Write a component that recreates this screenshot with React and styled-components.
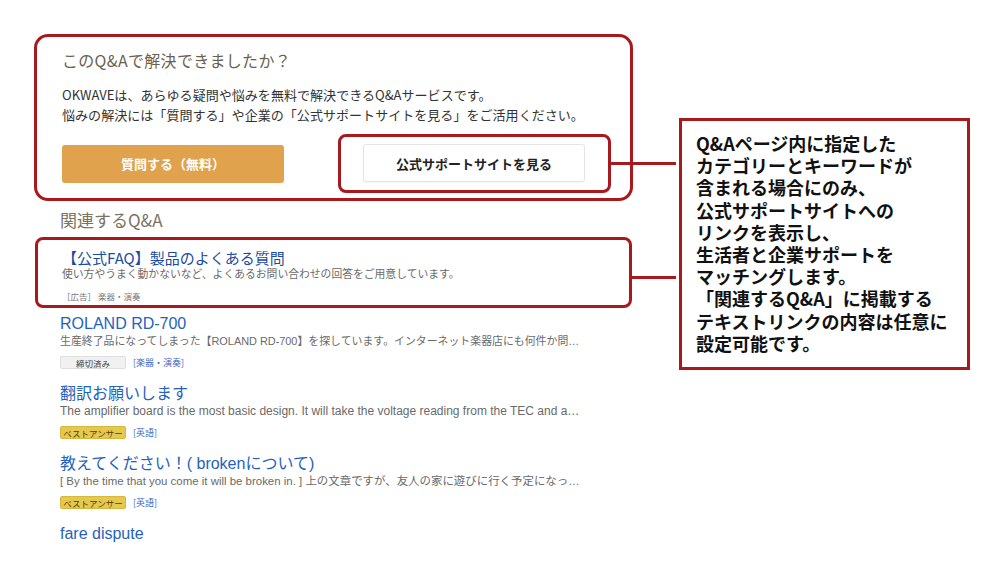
import React from 'react';
import styled, { createGlobalStyle } from 'styled-components';

const RED = '#a8191d';

const GlobalStyle = createGlobalStyle`
  html, body {
    margin: 0;
    padding: 0;
    background: #fff;
  }
  * {
    box-sizing: border-box;
  }
`;

const Page = styled.div`
  width: 1000px;
  height: 566px;
  display: flex;
  align-items: flex-start;
  padding: 34px 0 0 34px;
  font-family: 'Noto Sans CJK JP', sans-serif;
  overflow: hidden;
`;

const Column = styled.div`
  width: 599px;
  display: flex;
  flex-direction: column;
`;

const Panel = styled.section`
  height: 167px;
  border: 3px solid ${RED};
  border-radius: 14px;
  padding: 0 0 0 25px;
  display: flex;
  flex-direction: column;
`;

const PanelTitle = styled.h2`
  margin: 11px 0 0;
  font-size: 16px;
  line-height: 24px;
  font-weight: 400;
  color: #6a6150;
  letter-spacing: 0.3px;
`;

const PanelText = styled.p`
  margin: 13px 0 0;
  font-size: 13.05px;
  line-height: 20px;
  color: #333;
`;

const ButtonRow = styled.div`
  margin-top: 9px;
  display: flex;
  align-items: center;
  gap: 54px;
`;

const Button = styled.div`
  width: 222px;
  height: 38px;
  border-radius: 3px;
  display: flex;
  align-items: center;
  justify-content: center;
  font-size: 13px;
  font-weight: 700;
  background: ${(p) => (p.$primary ? '#e0a24c' : '#fff')};
  color: ${(p) => (p.$primary ? '#fff' : '#222')};
  border: ${(p) => (p.$primary ? 'none' : '1px solid #e4e4e4')};
  box-shadow: ${(p) => (p.$primary ? 'none' : '0 1px 1px rgba(0,0,0,0.04)')};
`;

const Highlight = styled.div`
  position: relative;
  border: 3px solid ${RED};
  border-radius: 8px;
  padding: ${(p) => p.$pad};
  height: ${(p) => p.$height};
`;

const Connector = styled.span`
  position: absolute;
  left: 100%;
  top: ${(p) => p.$top};
  width: ${(p) => p.$width};
  height: 3px;
  margin-left: 3px;
  background: ${RED};
`;

const SectionTitle = styled.h3`
  margin: 7px 0 0 26px;
  font-size: 17px;
  line-height: 24px;
  font-weight: 400;
  color: #7b725f;
`;

const FaqBox = styled(Highlight)`
  margin: 5px 1px 0;
  display: flex;
  flex-direction: column;
`;

const FaqTitle = styled.div`
  font-size: 15px;
  line-height: 18px;
  color: #1b4ba3;
`;

const Desc = styled.div`
  font-family: 'Liberation Sans', 'Noto Sans CJK JP', sans-serif;
  font-size: ${(p) => p.$size || '11px'};
  line-height: 14px;
  color: #6a6a6a;
  white-space: nowrap;
`;

const AdLine = styled.div`
  margin-top: 9px;
  font-size: 8.5px;
  line-height: 12px;
  color: #777;
`;

const List = styled.div`
  margin-top: 6px;
  padding-left: 26px;
  display: flex;
  flex-direction: column;
`;

const Item = styled.div`
  height: ${(p) => (p.$last ? 'auto' : '70px')};
  display: flex;
  flex-direction: column;
`;

const ItemTitle = styled.div`
  font-family: 'Liberation Sans', 'Noto Sans CJK JP', sans-serif;
  font-size: 16px;
  line-height: 20px;
  color: #2562bd;
`;

const Meta = styled.div`
  margin-top: 8px;
  display: flex;
  align-items: center;
  gap: 7px;
`;

const Tag = styled.span`
  width: 66px;
  height: 13px;
  border-radius: 2px;
  display: flex;
  align-items: center;
  justify-content: center;
  font-size: 8.5px;
  color: ${(p) => (p.$best ? '#4d3f0c' : '#444')};
  background: ${(p) => (p.$best ? '#e5c84e' : '#f1f1f1')};
  border: 1px solid ${(p) => (p.$best ? '#d8b83c' : '#dedede')};
`;

const Category = styled.span`
  font-size: 9px;
  color: #3a6cc4;
`;

const Callout = styled.aside`
  margin: 84px 0 0 46px;
  width: 291px;
  height: 252px;
  border: 3px solid ${RED};
  padding: 11px 0 0 14px;
  font-size: 18px;
  line-height: 22.2px;
  font-weight: 700;
  color: #111;
  white-space: pre-line;
`;

const items = [
  {
    title: 'ROLAND RD-700',
    desc: '生産終了品になってしまった【ROLAND RD-700】を探しています。インターネット楽器店にも何件か問…',
    size: '10.9px',
    tag: '締切済み',
    best: false,
    category: '[楽器・演奏]',
  },
  {
    title: '翻訳お願いします',
    desc: 'The amplifier board is the most basic design. It will take the voltage reading from the TEC and a…',
    size: '12px',
    tag: 'ベストアンサー',
    best: true,
    category: '[英語]',
  },
  {
    title: '教えてください！( brokenについて)',
    desc: '[ By the time that you come it will be broken in. ] 上の文章ですが、友人の家に遊びに行く予定になっ…',
    size: '11.45px',
    tag: 'ベストアンサー',
    best: true,
    category: '[英語]',
  },
];

const calloutText = `Q&Aページ内に指定した
カテゴリーとキーワードが
含まれる場合にのみ、
公式サポートサイトへの
リンクを表示し、
生活者と企業サポートを
マッチングします。
「関連するQ&A」に掲載する
テキストリンクの内容は任意に
設定可能です。`;

export default function App() {
  return (
    <Page>
      <GlobalStyle />
      <Column>
        <Panel>
          <PanelTitle>このQ&Aで解決できましたか？</PanelTitle>
          <PanelText>
            OKWAVEは、あらゆる疑問や悩みを無料で解決できるQ&Aサービスです。
            <br />
            悩みの解決には「質問する」や企業の「公式サポートサイトを見る」をご活用ください。
          </PanelText>
          <ButtonRow>
            <Button $primary>質問する（無料）</Button>
            <Highlight $pad="7px 23px 8px 22px">
              <Button>公式サポートサイトを見る</Button>
              <Connector $top="25px" $width="65px" />
            </Highlight>
          </ButtonRow>
        </Panel>

        <SectionTitle>関連するQ&A</SectionTitle>

        <FaqBox $pad="9px 0 0 24px" $height="71px">
          <FaqTitle>【公式FAQ】製品のよくある質問</FaqTitle>
          <Desc $size="10.8px">
            使い方やうまく動かないなど、よくあるお問い合わせの回答をご用意しています。
          </Desc>
          <AdLine>［広告］ 楽器・演奏</AdLine>
          <Connector $top="36px" $width="44px" />
        </FaqBox>

        <List>
          {items.map((item, i) => (
            <Item key={i}>
              <ItemTitle>{item.title}</ItemTitle>
              <Desc $size={item.size}>{item.desc}</Desc>
              <Meta>
                <Tag $best={item.best}>{item.tag}</Tag>
                <Category>{item.category}</Category>
              </Meta>
            </Item>
          ))}
          <Item $last>
            <ItemTitle>fare dispute</ItemTitle>
          </Item>
        </List>
      </Column>
      <Callout>{calloutText}</Callout>
    </Page>
  );
}
